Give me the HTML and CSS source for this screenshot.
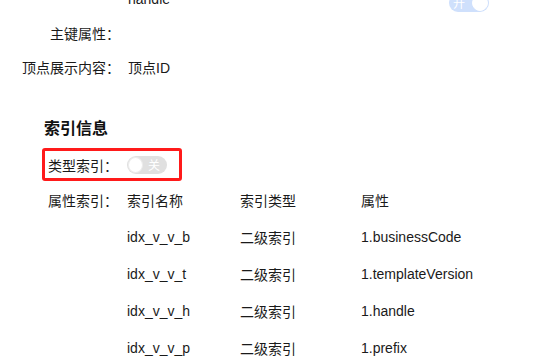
FILE: index.html
```html
<!DOCTYPE html>
<html>
<head>
    <meta charset="utf-8">
    <link rel="stylesheet" href="styles.css">
</head>
<body>
<div class="detail">
    <div class="form-row">
        <span class="form-label"></span>
        <span class="form-value">handle</span>
        <span class="switch switch-on is-disabled"><span class="switch-text">开</span><span class="switch-knob"></span></span>
    </div>
    <div class="form-row">
        <span class="form-label">主键属性：</span>
        <span class="form-value"></span>
    </div>
    <div class="form-row">
        <span class="form-label">顶点展示内容：</span>
        <span class="form-value">顶点ID</span>
    </div>
</div>

<section class="index-section">
    <h2 class="section-title">索引信息</h2>

    <!-- highlighted item -->
    <div class="index-type is-highlighted">
        <span class="index-label">类型索引：</span>
        <span class="switch"><span class="switch-knob"></span><span class="switch-text">关</span></span>
    </div>

    <div class="index-table">
        <span class="index-label">属性索引：</span>
        <span class="cell">索引名称</span>
        <span class="cell">索引类型</span>
        <span class="cell">属性</span>

        <span></span>
        <span class="cell">idx_v_v_b</span>
        <span class="cell">二级索引</span>
        <span class="cell">1.businessCode</span>

        <span></span>
        <span class="cell">idx_v_v_t</span>
        <span class="cell">二级索引</span>
        <span class="cell">1.templateVersion</span>

        <span></span>
        <span class="cell">idx_v_v_h</span>
        <span class="cell">二级索引</span>
        <span class="cell">1.handle</span>

        <span></span>
        <span class="cell">idx_v_v_p</span>
        <span class="cell">二级索引</span>
        <span class="cell">1.prefix</span>
    </div>
</section>
</body>
</html>
```

FILE: styles.css
```css
body {
    margin: 0;
    background: #fff;
    color: #1a1a1a;
    font-family: "Liberation Sans", "Noto Sans CJK SC", sans-serif;
    font-size: 14px;
    overflow: hidden;
}

/* Top detail rows */
.detail {
    margin-top: -18px;
}

.form-row {
    display: grid;
    grid-template-columns: 120px 313px auto;
    column-gap: 8px;
    align-items: center;
    height: 34px;
}

.form-label {
    text-align: right;
}

/* Switch */
.switch {
    display: inline-flex;
    align-items: center;
    justify-content: space-between;
    box-sizing: border-box;
    width: 40px;
    height: 18px;
    padding: 0 1px;
    border-radius: 9px;
    background: #e0e0e0;
    color: #fff;
    font-size: 12px;
    line-height: 18px;
}

.switch-knob {
    box-sizing: border-box;
    width: 16px;
    height: 16px;
    border: 1px solid #ececec;
    border-radius: 50%;
    background: #fff;
}

.switch-text {
    padding: 0 6px 0 5px;
    font-family: "Noto Sans CJK SC", sans-serif;
}

.switch-on {
    background: #cfe0fc;
    margin-top: 7px;
}

.switch-on .switch-knob {
    border-color: #fff;
}

.switch-on .switch-text {
    padding: 0 4px 0 3px;
}

/* Index section */
.index-section {
    margin: 33px 0 0 42px;
}

.section-title {
    margin: 0 0 7px 2px;
    font-size: 16px;
    font-weight: bold;
    line-height: 24px;
    color: #111;
}

.index-type {
    display: inline-flex;
    align-items: center;
    box-sizing: border-box;
    width: 140px;
    height: 33px;
    padding-left: 3px;
    border: 3px solid #ff1a1a;
    border-radius: 3px;
}

.index-label {
    width: 79px;
}

.index-table {
    display: grid;
    grid-template-columns: 79px 113px 121px 1fr;
    grid-auto-rows: 37px;
    align-items: center;
    padding-left: 6px;
}
```
